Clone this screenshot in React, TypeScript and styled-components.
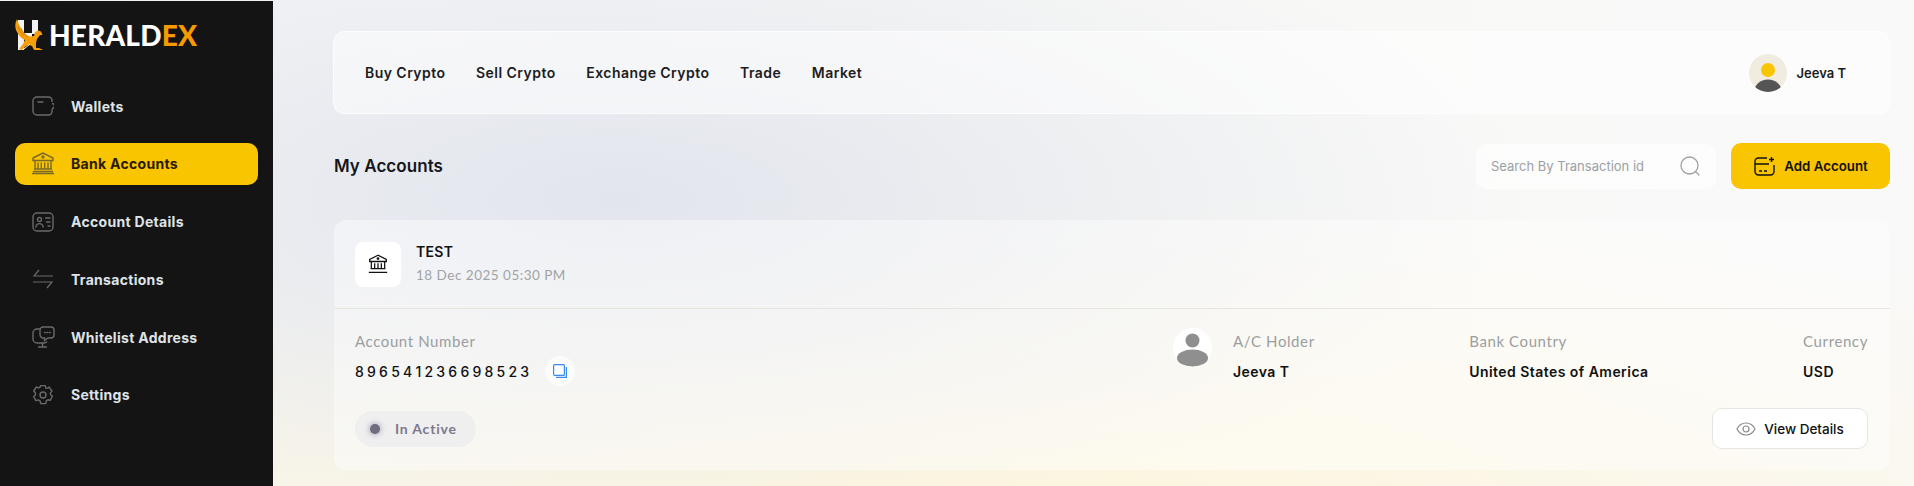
import React from 'react'
import styled, { createGlobalStyle } from 'styled-components'

const GlobalStyle = createGlobalStyle`
  html, body {
    margin: 0;
    padding: 0;
    height: 100%;
    overflow: hidden;
  }
  body {
    background: #f6f6f8;
    font-family: Inter, "Liberation Sans", sans-serif;
  }
  * {
    box-sizing: border-box;
  }
`

const navItems = [
  { label: 'Wallets', icon: 'wallet' },
  { label: 'Bank Accounts', icon: 'bank', active: true },
  { label: 'Account Details', icon: 'card' },
  { label: 'Transactions', icon: 'swap' },
  { label: 'Whitelist Address', icon: 'monitor' },
  { label: 'Settings', icon: 'gear' }
]

const topLinks = ['Buy Crypto', 'Sell Crypto', 'Exchange Crypto', 'Trade', 'Market']

const NavIcon = ({ name }: { name: string }) => {
  if (name === 'wallet') {
    return (
      <svg width='22' height='20' viewBox='0 0 22 20' fill='none' stroke='currentColor' strokeWidth='1.4'>
        <path d='M20 6V4.500A3.500 3.500 0 0 0 16.500 1H5A4 4 0 0 0 1 5v10a4 4 0 0 0 4 4h11.500a3.500 3.500 0 0 0 3.500-3.500V13' />
        <path d='M6 6h5' strokeLinecap='round' />
        <path d='M20 7.500a2.500 2.500 0 0 1 0 5' />
      </svg>
    )
  }
  if (name === 'bank') {
    return (
      <svg width='24' height='23' viewBox='0 0 24 23' fill='none' stroke='currentColor' strokeWidth='1.4'>
        <path d='M12 1 2 6v2.500h20V6z' />
        <circle cx='12' cy='5' r='1' />
        <path d='M4 8.500v8M20 8.500v8M7 10.500v6M10.300 10.500v6M13.700 10.500v6M17 10.500v6M3 17h18M1 21.500h22M2 19.500h20' />
      </svg>
    )
  }
  if (name === 'card') {
    return (
      <svg width='22' height='20' viewBox='0 0 22 20' fill='none' stroke='currentColor' strokeWidth='1.4'>
        <rect x='1' y='1' width='20' height='18' rx='4' />
        <circle cx='7.500' cy='7.500' r='2' />
        <path d='M3.800 15c.5-2.500 2-3.400 3.700-3.400s3.200.9 3.700 3.400M13.500 6H18M14.500 10H18M16 14h2' strokeLinecap='round' />
      </svg>
    )
  }
  if (name === 'swap') {
    return (
      <svg width='22' height='20' viewBox='0 0 22 20' fill='none' stroke='currentColor' strokeWidth='1.2'>
        <path d='M7 1 2 7h19M15 19l5-6H1' />
      </svg>
    )
  }
  if (name === 'monitor') {
    return (
      <svg width='23' height='22' viewBox='0 0 23 22' fill='none' stroke='currentColor' strokeWidth='1.4'>
        <path d='M8 3H5a4 4 0 0 0-4 4v6a4 4 0 0 0 4 4h7a4 4 0 0 0 3-1.500' />
        <path d='M11 1h8a3 3 0 0 1 3 3v5a3 3 0 0 1-3 3h-3l-3.500 2.500V12A3.500 3.500 0 0 1 8 8.500V4a3 3 0 0 1 3-3z' />
        <path d='M10.500 17v4M6.500 21h8' strokeLinecap='round' />
        <path d='M12.500 6.500h.8M15 6.500h.8M17.500 6.500h.8' strokeLinecap='round' />
      </svg>
    )
  }
  return (
    <svg width='22' height='22' viewBox='0 0 22 22' fill='none' stroke='currentColor' strokeWidth='1.4'>
      <circle cx='11' cy='11' r='3' />
      <path d='M8.800 1.600h4.400l.7 2.600 2-.1 1.300-1 2.800 4-1.700 2 .5 1.900 1.700 1-2.300 4.300-2.400-.6-1.600 1.400-.5 2.500H8.800l-.7-2.600-1.700-1.100-2.500.7L1.600 12.500l1.900-1.500-.1-2L1.700 7l2.600-4 2.500.9 1.400-1z' strokeLinejoin='round' />
    </svg>
  )
}

const Logo = () => (
  <svg width='28' height='32' viewBox='0 0 28 32'>
    <path d='M3 1h6v30H3zM17 1h6v14h-6zM9 14h8v4H9z' fill='#f4f4f4' />
    <path
      d='M2 0C0 4-.5 9 2 13c2 4 5 7 8 8l-2 4-4 5 3 1 4-4 3-1 3 1 2 4h9l-4-2h-3v-5l1-4 3-4h2.500L26 12.500 23 11.500 20 13l-1 4-4 .5C10 16 5 10 2 0z'
      fill='#f59f0c'
    />
    <path d='M6 9c1.500 4 4 7 7 9M3 7c1 4 3 7 6 10' stroke='#b96f00' strokeWidth='.6' fill='none' />
    <path d='M3 27l5-3M9 30l6-5' stroke='#f4f4f4' strokeWidth='1' fill='none' />
  </svg>
)

const App = () => {
  return (
    <StyledRoot>
      <GlobalStyle />
      <StyledSidebar>
        <StyledBrand>
          <Logo />
          <StyledBrandName>
            HERALD<span>EX</span>
          </StyledBrandName>
        </StyledBrand>
        <StyledNav>
          {navItems.map((item) => (
            <StyledNavItem key={item.label} $active={!!item.active}>
              <StyledNavIcon $active={!!item.active}>
                <NavIcon name={item.icon} />
              </StyledNavIcon>
              {item.label}
            </StyledNavItem>
          ))}
        </StyledNav>
      </StyledSidebar>

      <StyledMain>
        <StyledTopBar>
          <StyledTopLinks>
            {topLinks.map((link) => (
              <StyledTopLink key={link}>{link}</StyledTopLink>
            ))}
          </StyledTopLinks>
          <StyledUser>
            <svg width='38' height='38' viewBox='0 0 38 38'>
              <defs>
                <clipPath id='userClip'>
                  <circle cx='19' cy='19' r='19' />
                </clipPath>
              </defs>
              <circle cx='19' cy='19' r='19' fill='#f0ecdf' />
              <circle cx='19' cy='16' r='7' fill='#f9c400' />
              <ellipse cx='19' cy='38' rx='14' ry='12.500' fill='#555' clipPath='url(#userClip)' />
            </svg>
            <span>Jeeva T</span>
          </StyledUser>
        </StyledTopBar>

        <StyledHeading>
          <StyledTitle>My Accounts</StyledTitle>
          <StyledActions>
            <StyledSearch>
              <StyledSearchText>Search By Transaction id</StyledSearchText>
              <svg width='20' height='20' viewBox='0 0 20 20' fill='none' stroke='#9aa0a4' strokeWidth='1.300'>
                <circle cx='9.500' cy='9.500' r='8.500' />
                <path d='M16 16l3 3' strokeLinecap='round' />
              </svg>
            </StyledSearch>
            <StyledAddButton>
              <svg width='21' height='20' viewBox='0 0 21 20' fill='none' stroke='#111' strokeWidth='1.400'>
                <path d='M13 2H4.500A3.500 3.500 0 0 0 1 5.500v10A3.500 3.500 0 0 0 4.500 19h12a3.500 3.500 0 0 0 3.500-3.500V9M1 8h14M5 15h3M10 15h3M17.500 1v5M15 3.500h5' />
              </svg>
              Add Account
            </StyledAddButton>
          </StyledActions>
        </StyledHeading>

        <StyledCard>
          <StyledCardHead>
            <StyledBankTile>
              <svg width='20' height='20' viewBox='0 0 24 23' fill='none' stroke='#111' strokeWidth='1.500'>
                <path d='M12 1 2 6v2.500h20V6z' />
                <circle cx='12' cy='5' r='1' />
                <path d='M4 8.500v8M20 8.500v8M8 10.500v6M12 10.500v6M16 10.500v6M3 17h18M1 21.500h22' />
              </svg>
            </StyledBankTile>
            <div>
              <StyledBankName>TEST</StyledBankName>
              <StyledBankDate>18 Dec 2025 05:30 PM</StyledBankDate>
            </div>
          </StyledCardHead>

          <StyledCardBody>
            <StyledDetails>
              <div>
                <StyledLabel>Account Number</StyledLabel>
                <StyledNumberRow>
                  <StyledNumber>8 9 6 5 4 1 2 3 6 6 9 8 5 2 3</StyledNumber>
                  <StyledCopy>
                    <svg width='14' height='14' viewBox='0 0 14 14' fill='none' stroke='#3a8cf5' strokeWidth='1.200'>
                      <rect x='.6' y='.6' width='10.800' height='10.800' rx='1' />
                      <path d='M13.400 3v10.400H3' />
                    </svg>
                  </StyledCopy>
                </StyledNumberRow>
              </div>
              <StyledInfoGroup>
                <StyledHolder>
                  <svg width='39' height='39' viewBox='0 0 39 39'>
                    <circle cx='19.500' cy='19.500' r='19.500' fill='#fff' />
                    <circle cx='19.500' cy='12.500' r='7' fill='#8f8f8f' />
                    <ellipse cx='19.500' cy='30' rx='15.500' ry='8.500' fill='#8f8f8f' />
                  </svg>
                  <div>
                    <StyledLabel>A/C Holder</StyledLabel>
                    <StyledValue>Jeeva T</StyledValue>
                  </div>
                </StyledHolder>
                <div>
                  <StyledLabel>Bank Country</StyledLabel>
                  <StyledValue>United States of America</StyledValue>
                </div>
                <div>
                  <StyledLabel>Currency</StyledLabel>
                  <StyledValue>USD</StyledValue>
                </div>
              </StyledInfoGroup>
            </StyledDetails>

            <StyledCardFoot>
              <StyledStatus>
                <StyledStatusDot />
                In Active
              </StyledStatus>
              <StyledViewButton>
                <svg width='20' height='14' viewBox='0 0 20 14' fill='none' stroke='#8a8a8a' strokeWidth='1.200'>
                  <path d='M1 7c2-4 5-6 9-6s7 2 9 6c-2 4-5 6-9 6s-7-2-9-6z' />
                  <circle cx='10' cy='7' r='3' />
                </svg>
                View Details
              </StyledViewButton>
            </StyledCardFoot>
          </StyledCardBody>
        </StyledCard>
      </StyledMain>
    </StyledRoot>
  )
}

export default App

const StyledRoot = styled.div`
  display: flex;
  height: 100vh;
  overflow: hidden;
  background:
    radial-gradient(ellipse 900px 330px at 620px 200px, #e2e5ed 0%, rgba(226, 229, 237, 0) 100%),
    radial-gradient(ellipse 1500px 330px at 950px 520px, #fdf5dc 0%, rgba(253, 245, 220, 0) 100%),
    linear-gradient(90deg, #f3f4f7 0%, #f8f8f6 55%, #f9f9f9 100%);
`

const StyledSidebar = styled.aside`
  flex: 0 0 273px;
  margin-top: 1px;
  padding: 0 15px;
  background: #141414;
`

const StyledBrand = styled.div`
  display: flex;
  align-items: center;
  gap: 6px;
  height: 84px;
  padding-bottom: 16px;
`

const StyledBrandName = styled.div`
  font-family: Lato, sans-serif;
  font-size: 28px;
  font-weight: 900;
  letter-spacing: 0.2px;
  color: #fff;

  span {
    color: #f79a00;
  }
`

const StyledNav = styled.nav`
  display: flex;
  flex-direction: column;
  gap: 15.8px;
`

const StyledNavItem = styled.div<{ $active: boolean }>`
  display: flex;
  align-items: center;
  height: 42px;
  padding-left: 16px;
  border-radius: 10px;
  font-size: 14px;
  font-weight: 700;
  letter-spacing: 0.3px;
  color: ${({ $active }) => ($active ? '#2a1a00' : '#dfe3e8')};
  background: ${({ $active }) => ($active ? '#f9c400' : 'transparent')};
`

const StyledNavIcon = styled.span<{ $active: boolean }>`
  display: flex;
  align-items: center;
  justify-content: center;
  width: 24px;
  margin-right: 16px;
  color: ${({ $active }) => ($active ? '#7a6a2a' : '#6a6a6a')};
`

const StyledMain = styled.main`
  flex: 1;
  min-width: 0;
  padding: 31px 24px 0 60px;
`

const StyledTopBar = styled.header`
  display: flex;
  align-items: center;
  justify-content: space-between;
  height: 83px;
  padding: 0 43px 0 31px;
  border: 1px solid rgba(255, 255, 255, 0.7);
  border-radius: 12px;
  background: rgba(255, 255, 255, 0.5);
`

const StyledTopLinks = styled.div`
  display: flex;
  gap: 30.6px;
`

const StyledTopLink = styled.a`
  font-size: 14px;
  font-weight: 600;
  letter-spacing: 0.45px;
  color: #1c1c20;
`

const StyledUser = styled.div`
  display: flex;
  align-items: center;
  gap: 9px;
  font-size: 13px;
  font-weight: 600;
  color: #1c1c20;
`

const StyledHeading = styled.div`
  display: flex;
  align-items: center;
  justify-content: space-between;
  margin-top: 29px;
  padding-left: 1px;
`

const StyledTitle = styled.h1`
  margin: 0;
  font-size: 17px;
  font-weight: 600;
  letter-spacing: 0.05px;
  color: #15151a;
`

const StyledActions = styled.div`
  display: flex;
  align-items: center;
  gap: 15px;
`

const StyledSearch = styled.div`
  display: flex;
  align-items: center;
  justify-content: space-between;
  width: 240px;
  height: 45px;
  padding: 0 16px 0 15px;
  border-radius: 10px;
  background: rgba(255, 255, 255, 0.6);
`

const StyledSearchText = styled.span`
  font-size: 13px;
  color: #9aa0a4;
`

const StyledAddButton = styled.button`
  display: flex;
  align-items: center;
  justify-content: center;
  gap: 9px;
  width: 159px;
  height: 46px;
  padding-left: 7px;
  border: 0;
  border-radius: 10px;
  background: #f9c400;
  font-family: inherit;
  font-size: 13.3px;
  font-weight: 600;
  color: #111;
`

const StyledCard = styled.section`
  margin-top: 31px;
  margin-left: 1px;
  border-radius: 12px;
  background: rgba(255, 255, 255, 0.42);
`

const StyledCardHead = styled.div`
  display: flex;
  align-items: center;
  gap: 15px;
  height: 89px;
  padding-left: 21px;
  padding-bottom: 2px;
  border-bottom: 1px solid #e6e5de;
`

const StyledBankTile = styled.div`
  display: flex;
  align-items: center;
  justify-content: center;
  width: 46px;
  height: 45px;
  margin-top: 2px;
  border-radius: 8px;
  background: #fff;
`

const StyledBankName = styled.div`
  font-size: 14px;
  font-weight: 600;
  letter-spacing: 0.3px;
  color: #111;
`

const StyledBankDate = styled.div`
  margin-top: 7px;
  font-family: Lato, sans-serif;
  font-size: 13.5px;
  letter-spacing: 0.5px;
  color: #a0a3a6;
`

const StyledCardBody = styled.div`
  padding: 22px 22px 21px 21px;
`

const StyledDetails = styled.div`
  display: flex;
  align-items: flex-start;
  justify-content: space-between;
`

const StyledLabel = styled.div`
  font-family: Lato, sans-serif;
  font-size: 15px;
  line-height: 20px;
  letter-spacing: 0.6px;
  color: #9b9ea0;
`

const StyledNumberRow = styled.div`
  display: flex;
  align-items: center;
  gap: 16px;
  margin-top: 5px;
`

const StyledNumber = styled.div`
  font-size: 14px;
  font-weight: 500;
  word-spacing: -0.5px;
  color: #111;
`

const StyledCopy = styled.span`
  display: flex;
  align-items: center;
  justify-content: center;
  width: 30px;
  height: 30px;
  border-radius: 50%;
  background: rgba(255, 255, 255, 0.7);
`

const StyledInfoGroup = styled.div`
  display: flex;
  justify-content: space-between;
  width: 695px;
`

const StyledHolder = styled.div`
  display: flex;
  align-items: flex-start;
  gap: 21px;
  margin-top: -3px;

  > div {
    margin-top: 3px;
  }
`

const StyledValue = styled.div`
  margin-top: 9px;
  font-size: 14px;
  line-height: 24px;
  font-weight: 600;
  letter-spacing: 0.45px;
  color: #111;
`

const StyledCardFoot = styled.div`
  display: flex;
  align-items: center;
  justify-content: space-between;
  margin-top: 22px;
`

const StyledStatus = styled.div`
  display: flex;
  align-items: center;
  gap: 15px;
  width: 121px;
  height: 36px;
  padding-left: 15px;
  border-radius: 18px;
  background: #efeff0;
  font-family: Lato, sans-serif;
  font-size: 14px;
  font-weight: 700;
  letter-spacing: 0.8px;
  color: #7c7a8a;
`

const StyledStatusDot = styled.span`
  width: 10px;
  height: 10px;
  border-radius: 50%;
  background: #6f6c80;
  box-shadow: 0 0 6px #8f8d9c;
`

const StyledViewButton = styled.button`
  display: flex;
  align-items: center;
  justify-content: center;
  gap: 8px;
  width: 156px;
  height: 41px;
  border: 1px solid #e6e5e0;
  border-radius: 10px;
  background: #fff;
  font-family: inherit;
  font-size: 13.5px;
  font-weight: 500;
  color: #111;
`
